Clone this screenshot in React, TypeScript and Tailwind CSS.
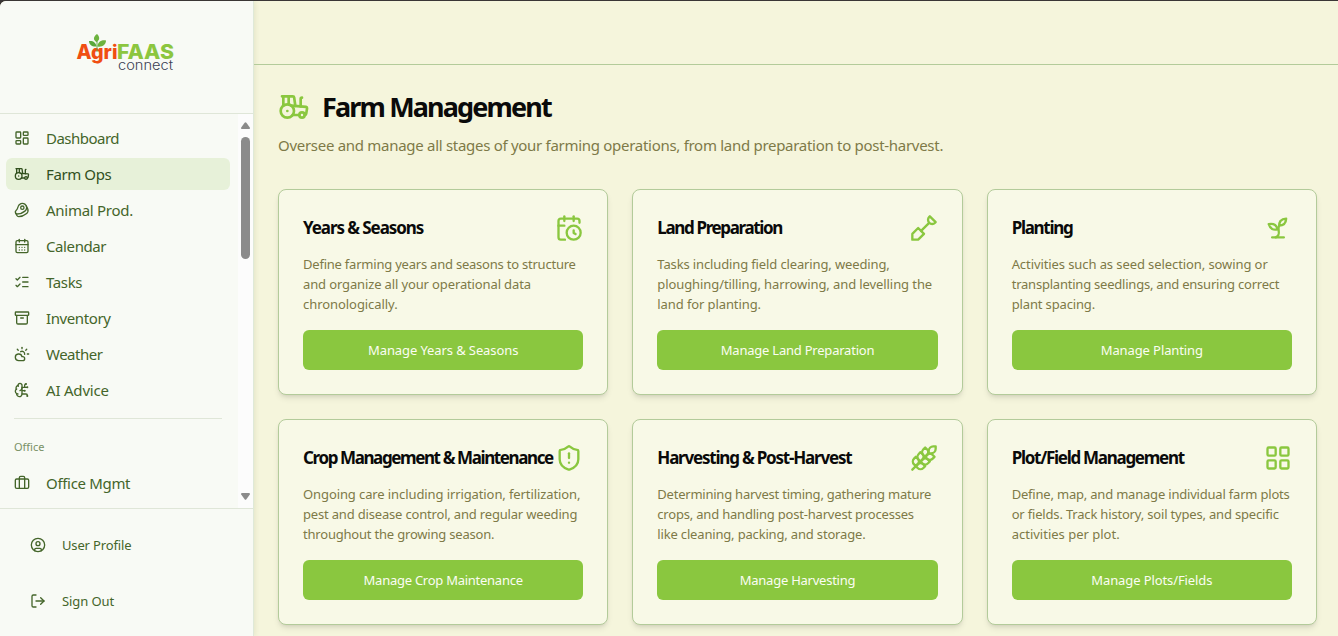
import type { ComponentType, ReactNode } from "react";
import {
  Archive,
  Beef,
  BrainCircuit,
  Briefcase,
  CalendarClock,
  CalendarDays,
  CircleUser,
  CloudSun,
  LayoutDashboard,
  LayoutGrid,
  ListChecks,
  LogOut,
  ShieldAlert,
  Tractor,
  Wheat,
} from "lucide-react";
import clsx from "clsx";

type Icon = ComponentType<{ className?: string }>;

// Text together with its letter spacing in px
type Tracked = [text: string, spacing: number];

function StrokeIcon({ className, children }: { className?: string; children: ReactNode }) {
  return (
    <svg
      viewBox="0 0 24 24"
      fill="none"
      stroke="currentColor"
      strokeWidth="2"
      strokeLinecap="round"
      strokeLinejoin="round"
      className={className}
    >
      {children}
    </svg>
  );
}

function Sprout({ className }: { className?: string }) {
  return (
    <StrokeIcon className={className}>
      <path d="M7 20h10" />
      <path d="M10 20c5.5-2.5.8-6.4 3-10" />
      <path d="M9.5 9.4c1.1.8 1.8 2.2 2.3 3.7-2 .4-3.5.4-4.8-.3-1.2-.6-2.3-1.9-3-4.2 2.8-.5 4.4 0 5.5.8z" />
      <path d="M14.1 6a7 7 0 0 0-1.1 4c1.9-.1 3.3-.6 4.3-1.4 1-1 1.6-2.3 1.7-4.6-2.7.1-4 1-4.9 2z" />
    </StrokeIcon>
  );
}

function Shovel({ className }: { className?: string }) {
  return (
    <StrokeIcon className={className}>
      <path d="M2 22v-5l5-5 5 5-5 5z" />
      <path d="M9.5 14.5 16 8" />
      <path d="m17 2 5 5-.5.5a3.53 3.53 0 0 1-5 0 3.53 3.53 0 0 1 0-5L17 2" />
    </StrokeIcon>
  );
}

function TrackedText({ value: [text, spacing], className }: { value: Tracked; className?: string }) {
  return (
    <span className={clsx("whitespace-nowrap", className)} style={{ letterSpacing: `${spacing}px` }}>
      {text}
    </span>
  );
}

const navItems: { label: Tracked; icon: Icon; active?: boolean }[] = [
  { label: ["Dashboard", -0.52], icon: LayoutDashboard },
  { label: ["Farm Ops", -0.4], icon: Tractor, active: true },
  { label: ["Animal Prod.", -0.28], icon: Beef },
  { label: ["Calendar", -0.4], icon: CalendarDays },
  { label: ["Tasks", -0.35], icon: ListChecks },
  { label: ["Inventory", -0.4], icon: Archive },
  { label: ["Weather", -0.5], icon: CloudSun },
  { label: ["AI Advice", -0.2], icon: BrainCircuit },
];

const cards: { title: Tracked; icon: Icon; lines: Tracked[]; action: Tracked }[] = [
  {
    title: ["Years & Seasons", -1.07],
    icon: CalendarClock,
    lines: [
      ["Define farming years and seasons to structure", -0.22],
      ["and organize all your operational data", -0.13],
      ["chronologically.", -0.06],
    ],
    action: ["Manage Years & Seasons", -0.1],
  },
  {
    title: ["Land Preparation", -1.36],
    icon: Shovel,
    lines: [
      ["Tasks including field clearing, weeding,", -0.13],
      ["ploughing/tilling, harrowing, and levelling the", -0.09],
      ["land for planting.", -0.1],
    ],
    action: ["Manage Land Preparation", -0.22],
  },
  {
    title: ["Planting", -1.3],
    icon: Sprout,
    lines: [
      ["Activities such as seed selection, sowing or", -0.09],
      ["transplanting seedlings, and ensuring correct", -0.22],
      ["plant spacing.", -0.14],
    ],
    action: ["Manage Planting", -0.1],
  },
  {
    title: ["Crop Management & Maintenance", -1.39],
    icon: ShieldAlert,
    lines: [
      ["Ongoing care including irrigation, fertilization,", -0.1],
      ["pest and disease control, and regular weeding", -0.18],
      ["throughout the growing season.", -0.2],
    ],
    action: ["Manage Crop Maintenance", -0.26],
  },
  {
    title: ["Harvesting & Post-Harvest", -1.2],
    icon: Wheat,
    lines: [
      ["Determining harvest timing, gathering mature", -0.23],
      ["crops, and handling post-harvest processes", -0.2],
      ["like cleaning, packing, and storage.", -0.17],
    ],
    action: ["Manage Harvesting", -0.24],
  },
  {
    title: ["Plot/Field Management", -1.28],
    icon: LayoutGrid,
    lines: [
      ["Define, map, and manage individual farm plots", -0.2],
      ["or fields. Track history, soil types, and specific", -0.18],
      ["activities per plot.", 0],
    ],
    action: ["Manage Plots/Fields", -0.1],
  },
];

function Logo() {
  return (
    <svg viewBox="0 0 98 38" className="h-[38px] w-[98px]">
      <g fontFamily="Inter, sans-serif" fontWeight="800" fontSize="20">
        <text x="0.5" y="25" textLength="41" lengthAdjust="spacingAndGlyphs" fill="#f04e12">
          Agri
        </text>
        <text x="41" y="25" textLength="57" lengthAdjust="spacingAndGlyphs" fill="#8cc63f">
          FAAS
        </text>
      </g>
      <text
        x="42"
        y="35.5"
        textLength="55"
        lengthAdjust="spacingAndGlyphs"
        fontFamily="Inter, sans-serif"
        fontWeight="300"
        fontSize="13"
        fill="#3c3f54"
      >
        connect
      </text>
      {/* Leaves growing out of the g */}
      <path d="M20.500 12.500C16 13 13 10.500 13 7c4-.5 7 1.500 7.500 5.500z" fill="#5aa83c" />
      <path d="M20.500 8c-3.500-2-3.500-5 .5-8 3 3 3 6-.5 8z" fill="#6db33f" />
      <path d="M21.500 12.500c0-4 3.500-7 8.500-6 0 4-4 7-8.500 6z" fill="#6db33f" />
      <path d="M21 7v11" stroke="#5aa83c" strokeWidth="0.9" />
    </svg>
  );
}

function NavItem({ label, icon: Icon, active }: { label: Tracked; icon: Icon; active?: boolean }) {
  return (
    <li
      className={clsx(
        "flex h-8 items-center gap-4 rounded-md px-2 text-[15px]",
        active && "bg-[#e7f1d9] text-[#31501e]"
      )}
    >
      <Icon className="size-4 shrink-0" />
      <TrackedText value={label} />
    </li>
  );
}

function Sidebar() {
  return (
    <aside className="flex w-[254px] shrink-0 flex-col rounded-tl-md border-r border-[#dfe9d8] bg-[#f8faf5] text-[#44652a] shadow-[1px_0_5px_rgba(80,90,30,0.1)]">
      <div className="flex h-[113px] shrink-0 justify-center border-b border-[#dfe6d8] pt-[33px] pr-[3px]">
        <Logo />
      </div>
      <div className="flex h-[394px] shrink-0">
        <nav className="flex-1 overflow-hidden pt-2 pr-2 pl-1.5">
          <ul className="flex flex-col gap-1">
            {navItems.map((item) => (
              <NavItem key={item.label[0]} {...item} />
            ))}
          </ul>
          <div className="mx-2 mt-3 border-t border-[#dfe6d8]" />
          <p className="mt-3 flex h-8 items-center px-2 text-[11px] text-[#789065]">Office</p>
          <ul className="mt-1">
            <NavItem label={["Office Mgmt", -0.32]} icon={Briefcase} />
          </ul>
        </nav>
        {/* Scrollbar track */}
        <div className="flex w-[15px] flex-col items-center bg-[#fcfcfc] py-2">
          <svg viewBox="0 0 9 7" className="h-[7px] w-[9px] fill-[#8b8b8b]">
            <path d="M3.6.7a1.2 1.2 0 0 1 1.8 0L8.8 5.5Q9.2 7 8 7H1Q-.2 7 .2 5.5z" />
          </svg>
          <div className="mt-2 h-[122px] w-[9px] rounded-full bg-[#8b8b8b]" />
          <svg viewBox="0 0 9 7" className="mt-auto h-[7px] w-[9px] rotate-180 fill-[#8b8b8b]">
            <path d="M3.6.7a1.2 1.2 0 0 1 1.8 0L8.8 5.5Q9.2 7 8 7H1Q-.2 7 .2 5.5z" />
          </svg>
        </div>
      </div>
      <div className="flex flex-1 flex-col gap-4 border-t border-[#dfe6d8] px-[30px] pt-4 text-[13px]">
        <div className="flex h-10 items-center gap-4">
          <CircleUser className="size-4" />
          <TrackedText value={["User Profile", -0.15]} className="pt-px" />
        </div>
        <div className="flex h-10 items-center gap-4">
          <LogOut className="size-4" />
          <TrackedText value={["Sign Out", -0.1]} className="pt-px" />
        </div>
      </div>
    </aside>
  );
}

export default function App() {
  return (
    <div className="h-[636px] overflow-hidden bg-[#3a3636] pt-px font-['Noto_Sans',sans-serif]">
      <div className="flex h-[635px] rounded-tl-md bg-[#f5f5dc]">
        <Sidebar />
        <main className="min-w-0 flex-1">
          <div className="h-16 border-b border-[#b3cb9a]" />
          <div className="pt-6 pr-[21px] pl-6">
            <h1 className="flex h-9 items-center gap-3 text-[27px] font-bold text-[#0a0a0a]">
              <Tractor className="size-8 text-[#8ac73f]" />
              <TrackedText value={["Farm Management", -1.85]} />
            </h1>
            <p className="mt-2 text-[15px] leading-6 text-[#7e7a48]">
              <TrackedText
                value={[
                  "Oversee and manage all stages of your farming operations, from land preparation to post-harvest.",
                  -0.29,
                ]}
              />
            </p>
            <div className="mt-8 grid grid-cols-3 gap-6">
              {cards.map(({ title, icon: Icon, lines, action }) => (
                <section
                  key={title[0]}
                  className="h-[206px] rounded-lg border border-[#b3cb9a] bg-[#f8f9e7] p-6 shadow-md"
                >
                  <div className="flex h-7 items-center justify-between">
                    <h2 className="text-[17px] font-bold text-[#0a0a0a]">
                      <TrackedText value={title} />
                    </h2>
                    <Icon className="size-7 shrink-0 text-[#8ac73f]" />
                  </div>
                  <p className="mt-3 text-[13px] leading-5 text-[#7e7a48]">
                    {lines.map((line) => (
                      <TrackedText key={line[0]} value={line} className="block" />
                    ))}
                  </p>
                  <button className="mt-4 flex h-10 w-full items-center justify-center rounded-md bg-[#8ac73f] text-[13px] text-[#fbfdf3]">
                    <TrackedText value={action} className="pt-px" />
                  </button>
                </section>
              ))}
            </div>
          </div>
        </main>
      </div>
    </div>
  );
}
